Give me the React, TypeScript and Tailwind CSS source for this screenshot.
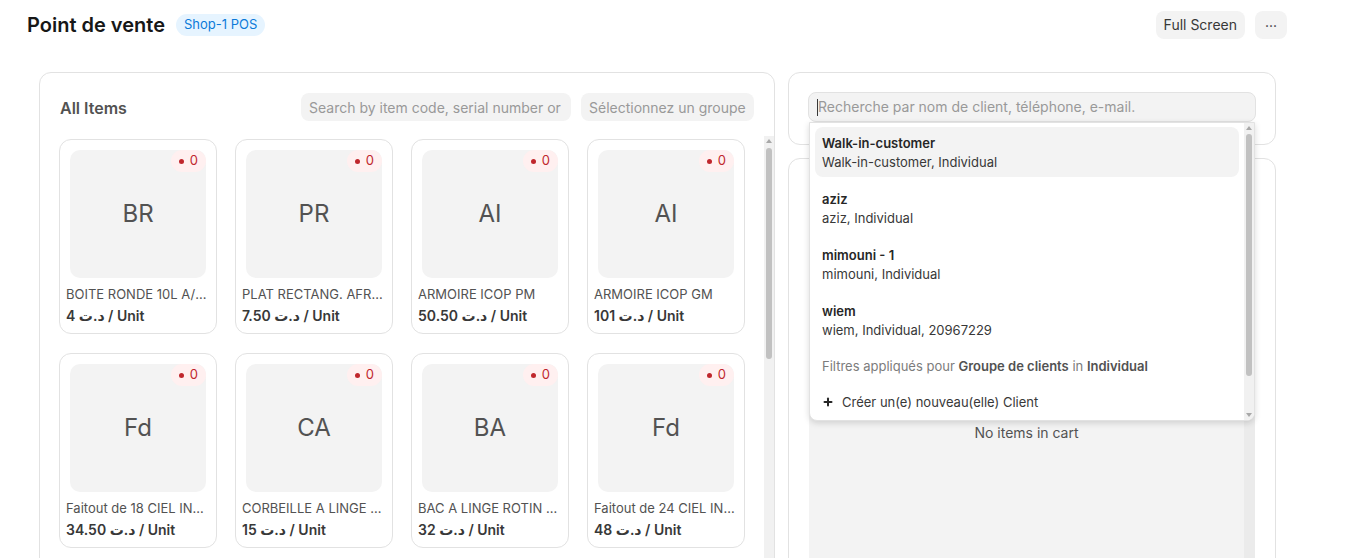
import React from 'react';
import { Plus } from 'lucide-react';

interface Item {
    initials: string;
    name: string;
    price: string;
}

interface Customer {
    name: string;
    details: string;
}

const items: Item[] = [
    { initials: 'BR', name: 'BOITE RONDE 10L A/COUVERCLE', price: '4' },
    { initials: 'PR', name: 'PLAT RECTANG. AFRICA 40CM', price: '7.50' },
    { initials: 'AI', name: 'ARMOIRE ICOP PM', price: '50.50' },
    { initials: 'AI', name: 'ARMOIRE ICOP GM', price: '101' },
    { initials: 'Fd', name: 'Faitout de 18 CIEL INOX', price: '34.50' },
    { initials: 'CA', name: 'CORBEILLE A LINGE ROTIN', price: '15' },
    { initials: 'BA', name: 'BAC A LINGE ROTIN GM', price: '32' },
    { initials: 'Fd', name: 'Faitout de 24 CIEL INOX', price: '48' },
];

const customers: Customer[] = [
    { name: 'Walk-in-customer', details: 'Walk-in-customer, Individual' },
    { name: 'aziz', details: 'aziz, Individual' },
    { name: 'mimouni - 1', details: 'mimouni, Individual' },
    { name: 'wiem', details: 'wiem, Individual, 20967229' },
];

// classic scrollbar look (track + thumb + little arrows)
const Scrollbar: React.FC<{ thumbTop: number; thumbHeight: number; bottomArrow?: boolean; className?: string }> = ({
    thumbTop,
    thumbHeight,
    bottomArrow,
    className = '',
}) => (
    <div className={`relative w-[10px] shrink-0 bg-[#f1f1f1] ${className}`}>
        <div className="absolute left-[2px] top-[3px] w-0 h-0 border-x-[3px] border-x-transparent border-b-[4px] border-b-[#a8a8a8]" />
        <div className="absolute left-[2px] right-[2px] rounded-full bg-[#c1c1c1]" style={{ top: thumbTop, height: thumbHeight }} />
        {bottomArrow && (
            <div className="absolute left-[2px] bottom-[3px] w-0 h-0 border-x-[3px] border-x-transparent border-t-[4px] border-t-[#a8a8a8]" />
        )}
    </div>
);

const ItemCard: React.FC<{ item: Item }> = ({ item }) => (
    <div className="h-[195px] rounded-xl border border-[#e2e2e2] px-[6px] pt-[10px] bg-white">
        <div className="relative mx-[4px] h-[128px] rounded-[10px] bg-[#f3f3f3] flex items-center justify-center">
            <span className="text-2xl text-[#525252]">{item.initials}</span>
            <div className="absolute top-0 right-0 h-[22px] px-[8px] rounded-full bg-[#fff0f0] flex items-center gap-[6px]">
                <span className="w-[5px] h-[5px] rounded-full bg-[#c0272d]" />
                <span className="text-[13px] text-[#c0272d]">0</span>
            </div>
        </div>
        <div className="mt-[7px] text-[13px] leading-[18px] text-[#525252] truncate">{item.name}</div>
        <div className="mt-[3px] text-sm leading-5 font-semibold text-[#383838]">{`د.ت ${item.price} / Unit`}</div>
    </div>
);

export default function App() {
    return (
        <div className="h-[558px] overflow-hidden bg-white font-['Inter','DejaVu_Sans',sans-serif] text-[#383838]">
            {/* Header */}
            <div className="h-[50px] flex items-center justify-between pl-[27px] pr-[73px]">
                <div className="flex items-center gap-[11px]">
                    <h1 className="text-xl font-semibold text-[#171717]">Point de vente</h1>
                    <span className="h-[22px] px-[8px] rounded-full bg-[#e6f4ff] text-[13px] text-[#0b7ad9] flex items-center">Shop-1 POS</span>
                </div>
                <div className="flex items-center gap-[10px]">
                    <button className="h-[28px] px-[8px] rounded-lg bg-[#f3f3f3] text-sm text-[#383838]">Full Screen</button>
                    <button className="h-[28px] w-[32px] rounded-lg bg-[#f3f3f3] text-sm text-[#383838] leading-none pb-[6px]">...</button>
                </div>
            </div>

            {/* Body */}
            <div className="flex gap-[13px] pl-[39px] pt-[22px]">
                {/* Items panel */}
                <div className="w-[736px] h-[520px] shrink-0 rounded-xl border border-[#e2e2e2] flex flex-col">
                    <div className="flex items-center justify-between pl-5 pr-5 pt-5">
                        <h2 className="text-base font-semibold text-[#525252] pt-[2px]">All Items</h2>
                        <div className="flex gap-[10px]">
                            <input
                                readOnly
                                placeholder="Search by item code, serial number or barcode"
                                className="w-[270px] h-[28px] rounded-lg bg-[#f3f3f3] px-[8px] text-sm outline-none placeholder:text-[#999999]"
                            />
                            <input
                                readOnly
                                placeholder="Sélectionnez un groupe d'articles"
                                className="w-[173px] h-[28px] rounded-lg bg-[#f3f3f3] px-[8px] text-sm outline-none placeholder:text-[#999999]"
                            />
                        </div>
                    </div>
                    <div className="flex flex-1 min-h-0 mt-[15px]">
                        <div className="flex-1 pl-[19px] pt-[3px] overflow-hidden">
                            <div className="grid grid-cols-[repeat(4,158px)] gap-x-[18px] gap-y-[19px]">
                                {items.map((item, i) => (
                                    <ItemCard key={i} item={item} />
                                ))}
                            </div>
                        </div>
                        <Scrollbar thumbTop={12} thumbHeight={211} />
                    </div>
                </div>

                {/* Customer + cart */}
                <div className="w-[488px] shrink-0 flex flex-col gap-[13px]">
                    <div className="h-[73px] rounded-xl border border-[#e2e2e2] px-[19px] pt-[19px] relative z-10">
                        <div className="relative">
                            <div className="h-[30px] rounded-lg border border-[#e2e2e2] bg-[#f3f3f3] pl-[8px] flex items-center">
                                <span className="w-px h-[17px] bg-[#383838]" />
                                <span className="text-sm text-[#999999]">Recherche par nom de client, téléphone, e-mail.</span>
                            </div>

                            {/* Dropdown */}
                            <div className="absolute top-full left-px right-px h-[299px] bg-white rounded-b-lg border border-[#e2e2e2] shadow-[0_2px_6px_rgba(0,0,0,0.15)] flex overflow-hidden">
                                <div className="flex-1 pl-[5px] pr-[5px] pt-[4px]">
                                    <div className="flex flex-col gap-[6px]">
                                        {customers.map((c, i) => (
                                            <div
                                                key={c.name}
                                                className={`h-[50px] px-[7px] rounded-lg flex flex-col justify-center gap-[1px] ${i === 0 ? 'bg-[#f3f3f3]' : ''}`}
                                            >
                                                <div className="text-[13px] leading-[18px] font-semibold text-[#262626]">{c.name}</div>
                                                <div className="text-[13px] leading-[18px] text-[#383838]">{c.details}</div>
                                            </div>
                                        ))}
                                    </div>
                                    <div className="mt-[12px] px-[7px] text-[13px] leading-[18px] text-[#7c7c7c]">
                                        Filtres appliqués pour <span className="font-semibold text-[#525252]">Groupe de clients</span> in{' '}
                                        <span className="font-semibold text-[#525252]">Individual</span>
                                    </div>
                                    <div className="mt-[18px] px-[7px] flex items-center gap-[8px] text-[13px] leading-[18px] text-[#383838]">
                                        <Plus className="w-[12px] h-[12px] text-[#262626]" strokeWidth={4} />
                                        Créer un(e) nouveau(elle) Client
                                    </div>
                                </div>
                                <Scrollbar thumbTop={11} thumbHeight={242} bottomArrow className="h-full" />
                            </div>
                        </div>
                    </div>

                    {/* Cart */}
                    <div className="h-[420px] rounded-xl border border-[#e2e2e2] px-[20px] pt-[19px]">
                        <div className="h-full bg-[#f3f3f3] flex">
                            <div className="flex-1 pt-[245px] text-center text-sm text-[#525252]">No items in cart</div>
                            <div className="w-[11px] bg-[#ebebeb]" />
                        </div>
                    </div>
                </div>
            </div>
        </div>
    );
}
